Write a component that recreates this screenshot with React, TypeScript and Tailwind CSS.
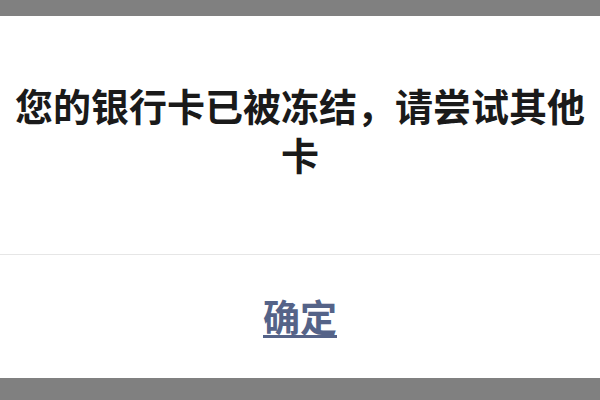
export default function App() {
  return (
    <div
      className="flex h-[400px] w-[600px] flex-col bg-[#808080] pt-4 pb-[22px]"
      style={{ fontFamily: '"Noto Sans CJK SC", "Noto Sans", sans-serif' }}
    >
      <div className="flex flex-1 flex-col bg-white">
        {/* message */}
        <div className="flex h-[239px] items-center justify-center border-b border-[#e6e6e6] px-2 pb-3">
          <p className="text-center text-[38px] font-semibold leading-[49px] text-[#1a1a1a]">
            您的银行卡已被冻结，请尝试其他卡
          </p>
        </div>
        {/* action */}
        <div className="flex flex-1 items-center justify-center">
          <button className="text-[37px] font-semibold leading-none text-[#556388] underline decoration-[3px] underline-offset-[3px]">
            确定
          </button>
        </div>
      </div>
    </div>
  );
}
